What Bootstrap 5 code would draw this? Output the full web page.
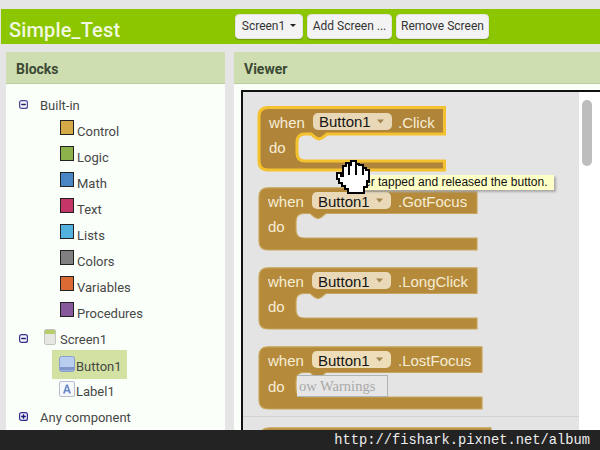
<!DOCTYPE html>
<html lang="en">
<head>
<meta charset="utf-8">
<title>Simple_Test</title>
<link rel="stylesheet" href="https://cdn.jsdelivr.net/npm/bootstrap@5.3.0/dist/css/bootstrap.min.css">
<style>
html,body{width:600px;height:450px;overflow:hidden;background:#e5e5e5;font-family:Roboto,"Liberation Sans",sans-serif}
.stage{position:relative;width:600px;height:450px;padding-top:9px;overflow:hidden}
.topbar{height:35px;margin-left:1px;background:#8bc600;padding:5px 0 5px 8px}
.projname{width:226px;padding-top:7px;font-size:20px;font-weight:500;line-height:25px;color:#f1f8df;letter-spacing:.15px}
.gwt-btn{height:25px;padding:0;font-size:12px;line-height:23px;color:#333;white-space:nowrap;background:#f3f3f3;border:1px solid #e4e4e4;border-radius:4px;box-shadow:0 1px 1px #6d9a00}
.gwt-btn i{display:inline-block;margin:0 0 2px 5px;border:3px solid transparent;border-top-color:#222;border-bottom:0;vertical-align:middle}
.w-screen{width:68px}.w-add{width:85px}.w-remove{width:93px}
.panes{height:378px;padding:8px 0 0 6px;gap:9px}
.pane-a{width:219px;flex:none}
.pane-b{flex:1;min-width:0}
.pane-head{height:32px;padding-left:10px;font-size:14px;font-weight:700;line-height:35px;color:#3c4a35;background:#cfdeb0;border-bottom:1px solid #bcc9a0}
.pane-body{height:346px;background:#fbfffa;overflow:hidden}
.treebox{padding-top:9px;font-size:13px;color:#474747}
.tree-row{height:26px;line-height:26px}
.toggle{width:9px;height:9px;margin:-4px 12px 0 13px;flex:none}
.indent{padding-left:54px}
.swatch{width:14px;height:15px;margin:-10px 3px 0 0;border:1.5px solid #222;flex:none}
.c-control{background:#d3aa46}.c-logic{background:#8db24c}.c-math{background:#4a86c6}.c-text{background:#c43568}.c-lists{background:#52b1dd}.c-colors{background:#808080}.c-vars{background:#db6a34}.c-procs{background:#85599b}
.selrow{width:75px;height:29px;margin:-3px 0 0 46px;padding:4px 0 0 7px;background:#d3e2a3}
.labrow{padding-left:53px}
.scr{margin-right:1px;margin-top:-6px;flex:none}
.scr-sheet{margin-left:4px;margin-right:4px}
.frame{position:relative;height:340px;margin:6px 0 0 7px;border:2px solid #111;border-right:0;border-bottom:0;background:#fff;overflow:hidden}
.canvasarea{width:336px;height:340px;padding:14px 0 0 15px;background:#e4e4e4;gap:16px}
.blk{display:block;overflow:visible;flex:none}
.blk-hot{margin:0 0 -1px -1px}
.blk-cut{margin:1px 0 0 2px}
.blk .kw{font:15px "Liberation Sans",sans-serif;fill:#f6edd6}
.blk .fld{font:15px "Liberation Sans",sans-serif;fill:#151515}
.ghost{position:absolute;left:54px;top:283px;width:91px;height:22px;padding-left:2px;font:14.5px/20px "Liberation Serif",serif;color:#a9a9a9;border:1px solid #aeb4b4;border-left:0;background:#e6e6e6}
.vthumb{position:absolute;left:339px;top:8px;width:10px;height:66px;border-radius:5px;background:#bdbdbd}
.hline{position:absolute;left:0;top:324px;width:336px;height:1px;background:#d2d2d2}
.tipbox{position:absolute;left:362px;top:175px;width:192px;height:15px;padding-left:2px;font:12px/15px "Liberation Sans",sans-serif;color:#111;background:#ffffc8;box-shadow:2px 2px 2px #aaa}
.handcur{position:absolute;left:336px;top:159px;display:block}
.urlbar{position:absolute;left:0;bottom:0;width:600px;height:20px;padding-right:10px;font:13.75px/21px "Liberation Mono",monospace;color:#eee;text-align:right;background:#232323}
</style>
</head>
<body>
<div class="stage">
  <div class="topbar d-flex align-items-center">
    <div class="projname">Simple_Test</div>
    <div class="d-flex gap-1">
      <button class="gwt-btn w-screen">Screen1<i></i></button>
      <button class="gwt-btn w-add">Add Screen ...</button>
      <button class="gwt-btn w-remove">Remove Screen</button>
    </div>
  </div>
  <div class="panes d-flex">
    <section class="pane-a">
      <div class="pane-head">Blocks</div>
      <div class="pane-body treebox">
        <div class="tree-row d-flex align-items-center"><svg class="toggle" viewBox="0 0 9 9"><rect x=".6" y=".6" width="7.8" height="7.8" rx="2" fill="#f4f2fa" stroke="#4a4a96" stroke-width="1.2"/><path d="M2.2 4.5h4.6" stroke="#23235f" stroke-width="1.4"/></svg>Built-in</div>
        <div class="tree-row indent d-flex align-items-center"><span class="swatch c-control"></span>Control</div>
        <div class="tree-row indent d-flex align-items-center"><span class="swatch c-logic"></span>Logic</div>
        <div class="tree-row indent d-flex align-items-center"><span class="swatch c-math"></span>Math</div>
        <div class="tree-row indent d-flex align-items-center"><span class="swatch c-text"></span>Text</div>
        <div class="tree-row indent d-flex align-items-center"><span class="swatch c-lists"></span>Lists</div>
        <div class="tree-row indent d-flex align-items-center"><span class="swatch c-colors"></span>Colors</div>
        <div class="tree-row indent d-flex align-items-center"><span class="swatch c-vars"></span>Variables</div>
        <div class="tree-row indent d-flex align-items-center"><span class="swatch c-procs"></span>Procedures</div>
        <div class="tree-row d-flex align-items-center"><svg class="toggle" viewBox="0 0 9 9"><rect x=".6" y=".6" width="7.8" height="7.8" rx="2" fill="#f4f2fa" stroke="#33338c" stroke-width="1.2"/><path d="M2.2 4.5h4.6" stroke="#1c1c6a" stroke-width="1.4"/></svg><svg class="scr scr-sheet" width="12" height="16" viewBox="0 0 12 16"><rect x=".5" y=".5" width="11" height="15" rx="1.5" fill="#e6e6e2" stroke="#c4c4c0"/><rect x="1" y="1" width="10" height="4" fill="#b7cc6a"/></svg>Screen1</div>
        <div class="selrow d-flex align-items-center"><svg class="scr" width="16" height="16" viewBox="0 0 16 16"><rect x=".5" y=".5" width="15" height="15" rx="2" fill="#b9cdee" stroke="#8b9fcb"/><path d="M1 11h14v3.5H1z" fill="#8197cc"/></svg>Button1</div>
        <div class="tree-row labrow d-flex align-items-center"><svg class="scr" width="16" height="16" viewBox="0 0 16 16"><rect x=".5" y=".5" width="15" height="15" rx="1.5" fill="#f7f8fc" stroke="#b8bccd"/><path d="M4 12.500 7 3.500h2l3 9h-2l-.6-2H6.600l-.6 2zM7 9h2L8 5.800z" fill="#6c8cc8"/></svg>Label1</div>
        <div class="tree-row d-flex align-items-center"><svg class="toggle" viewBox="0 0 9 9"><rect x=".6" y=".6" width="7.8" height="7.800" rx="2" fill="#f4f2fa" stroke="#2b2b90" stroke-width="1.2"/><path d="M2.200 4.500h4.600M4.500 2.200v4.600" stroke="#15157a" stroke-width="1.400"/></svg>Any component</div>
      </div>
    </section>
    <section class="pane-b">
      <div class="pane-head">Viewer</div>
      <div class="pane-body">
        <div class="frame">
          <div class="canvasarea d-flex flex-column">
            <svg class="blk blk-hot" width="190" height="66" viewBox="0 0 190 66">
              <path d="M11 1.500H187.500V28H70l-5 4-3 1-3-1-5-4H48q-8 0-8 8v11q0 8 8 8H187.500V64H11q-9 0-9-9V10.500q0-9 9-9z" fill="#b0853a" stroke="#f3c22e" stroke-width="3"/>
              <text class="kw" x="12" y="22">when</text>
              <rect x="56" y="7" width="79" height="17" rx="5" fill="#e9d8b8"/>
              <text class="fld" x="62" y="21">Button1</text>
              <path d="M120 13.500h7l-3.500 4z" fill="#a08550"/>
              <text class="kw" x="141" y="22">.Click</text>
              <text class="kw" x="12" y="47">do</text>
            </svg>
            <svg class="blk" width="220" height="64" viewBox="0 0 220 64">
              <path d="M10 .8H219V26.500H68l-5 4-3 1-3-1-5-4H46q-8 0-8 8V43q0 8 8 8H219V63H10q-9 0-9-9V9.800q0-9 9-9z" fill="#b58a3a" stroke="#c8a55c" stroke-width="1.200"/>
              <text class="kw" x="10" y="20">when</text>
              <rect x="54" y="5" width="79" height="17" rx="5" fill="#e9d9b9"/>
              <text class="fld" x="60" y="20">Button1</text>
              <path d="M118 11.500h7l-3.500 4z" fill="#a08550"/>
              <text class="kw" x="140" y="20">.GotFocus</text>
              <text class="kw" x="10" y="45">do</text>
            </svg>
            <svg class="blk" width="220" height="63" viewBox="0 0 220 63">
              <path d="M10 .8H219V26.500H68l-5 4-3 1-3-1-5-4H46q-8 0-8 8V43q0 8 8 8H219V62H10q-9 0-9-9V9.800q0-9 9-9z" fill="#b58a3a" stroke="#c8a55c" stroke-width="1.200"/>
              <text class="kw" x="10" y="20">when</text>
              <rect x="54" y="5" width="79" height="17" rx="5" fill="#e9d9b9"/>
              <text class="fld" x="60" y="20">Button1</text>
              <path d="M118 11.500h7l-3.500 4z" fill="#a08550"/>
              <text class="kw" x="140" y="20">.LongClick</text>
              <text class="kw" x="10" y="45">do</text>
            </svg>
            <svg class="blk" width="225" height="64" viewBox="0 0 225 64">
              <path d="M10 .8H224V26.500H68l-5 4-3 1-3-1-5-4H46q-8 0-8 8V43q0 8 8 8H224V63H10q-9 0-9-9V9.800q0-9 9-9z" fill="#b58a3a" stroke="#c8a55c" stroke-width="1.200"/>
              <text class="kw" x="10" y="20">when</text>
              <rect x="54" y="5" width="79" height="17" rx="5" fill="#edddb9"/>
              <text class="fld" x="60" y="20">Button1</text>
              <path d="M118 11.500h7l-3.500 4z" fill="#a08550"/>
              <text class="kw" x="140" y="20">.LostFocus</text>
              <text class="kw" x="10" y="46">do</text>
            </svg>
            <svg class="blk blk-cut" width="232" height="30" viewBox="0 0 232 30">
              <path d="M10 .8H231V30H0V9.800q0-9 10-9z" fill="#b58a3a" stroke="#c8a55c" stroke-width="1.200"/>
            </svg>
          </div>
          <div class="ghost">ow Warnings</div>
          <div class="hline"></div>
          <div class="vthumb"></div>
        </div>
      </div>
    </section>
  </div>
  <div class="tipbox">er tapped and released the button.</div>
  <svg class="handcur" width="36" height="36" viewBox="0 0 36 36" shape-rendering="crispEdges">
    <path d="M1 14H5V17H7V7H10V4H13V6H15V2H20V5H23V6H27V9H30V11H33V22H31V28H28V34H12V30H9V27H6V24H3V20H1Z" fill="#fff" stroke="#000" stroke-width="2"/>
    <path d="M13 6V16M20 5V16M27 9V16" stroke="#000" stroke-width="2" fill="none"/>
  </svg>
  <div class="urlbar">http://fishark.pixnet.net/album</div>
</div>
<script src="https://cdn.jsdelivr.net/npm/bootstrap@5.3.0/dist/js/bootstrap.bundle.min.js"></script>
</body>
</html>
